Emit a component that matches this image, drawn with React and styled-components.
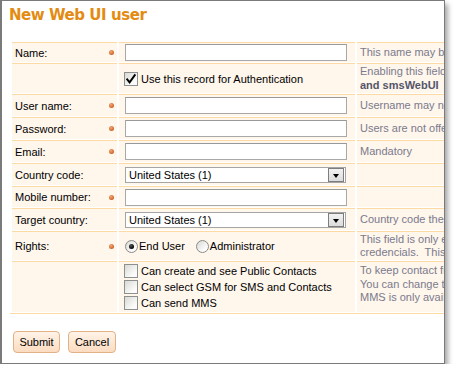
import React from 'react';
import styled, { createGlobalStyle } from 'styled-components';

const Global = createGlobalStyle`
  html, body { margin: 0; padding: 0; background: #fff; }
  body { font-family: "Liberation Sans", Arial, sans-serif; font-size: 11px; color: #000; }
`;

const Window = styled.div`
  width: 445px;
  height: 364px;
  box-sizing: border-box;
  border: 1px solid #7a7a7a;
  border-left: 2px solid #7a7a7a;
  background: #fff;
  box-shadow: 3px 4px 5px rgba(0, 0, 0, 0.35);
  overflow: hidden;
  padding: 5px 0 0 7px;
`;

const Title = styled.h1`
  margin: 0 0 18px 0;
  font-family: "DejaVu Sans", Verdana, sans-serif;
  font-weight: bold;
  font-size: 15px;
  letter-spacing: -0.45px;
  line-height: 18px;
  color: #e48b12;
  white-space: nowrap;
`;

const Form = styled.div`
  display: grid;
  grid-template-columns: 105px 236px 260px;
  grid-template-rows: 20px 30px 22px 22px 22px 22px 21px 22px 29px 51px;
  column-gap: 2px;
  row-gap: 1px;
  margin-left: 3px;
`;

const Cell = styled.div`
  box-sizing: border-box;
  border-top: 1px solid #fdd9a3;
  background: #fff6ec;
  display: flex;
  align-items: center;
  min-width: 0;
`;

const LabelCell = styled(Cell)`
  justify-content: space-between;
  padding: 0 3px 0 3px;
  white-space: nowrap;
`;

const FieldCell = styled(Cell)`
  padding-left: 6px;
`;

const HelpCell = styled(Cell)`
  padding: 0 3px;
  color: #7a7a8c;
  line-height: 13.5px;
  white-space: nowrap;
  overflow: hidden;
  align-items: ${(p) => (p.$top ? 'flex-start' : 'center')};
  padding-top: ${(p) => (p.$top ? '2px' : '0')};
`;

const HelpText = styled.div``;

const Strong = styled.b`
  color: #55556a;
`;

const Dot = styled.span`
  width: 5px;
  height: 5px;
  border-radius: 50%;
  background: radial-gradient(circle at 40% 35%, #f4a878, #cc6428 70%);
  flex: none;
`;

const TextInput = styled.input`
  box-sizing: border-box;
  width: 222px;
  height: 17px;
  margin: 0;
  padding: 0 3px;
  border: 1px solid #a8a8a8;
  border-top-color: #999;
  background: #fff;
  font: inherit;
  outline: none;
`;

const Select = styled.div`
  box-sizing: border-box;
  width: 221px;
  height: 16px;
  border: 1px solid #a5a5a5;
  background: #fff;
  display: flex;
  align-items: center;
  justify-content: space-between;
  padding-left: 3px;
  padding-right: 1px;
`;

const SelectText = styled.span`
  white-space: nowrap;
`;

const DropButton = styled.span`
  box-sizing: border-box;
  width: 16px;
  height: 14px;
  border: 1px solid #7d7d7d;
  background: linear-gradient(#f2f2f2, #dcdcdc);
  display: flex;
  align-items: center;
  justify-content: center;
  padding-top: 2px;
`;

const Triangle = styled.span`
  width: 0;
  height: 0;
  border-left: 3.5px solid transparent;
  border-right: 3.5px solid transparent;
  border-top: 4px solid #000;
`;

const CheckLabel = styled.label`
  display: flex;
  align-items: center;
  gap: 3px;
  white-space: nowrap;
  height: 16px;
`;

const Box = styled.span`
  box-sizing: border-box;
  width: 14px;
  height: 14px;
  margin-left: -1px;
  border: 1px solid #8e8f8f;
  background: linear-gradient(135deg, #d9d9d4, #fbfbfb 75%);
  display: flex;
  align-items: center;
  justify-content: center;
  flex: none;
`;

const CheckList = styled.div`
  display: flex;
  flex-direction: column;
`;

const RadioGroup = styled.div`
  display: flex;
  align-items: center;
  gap: 11px;
`;

const RadioLabel = styled.label`
  display: flex;
  align-items: center;
  gap: 1px;
  white-space: nowrap;
`;

const Radio = styled.span`
  box-sizing: border-box;
  width: 13px;
  height: 13px;
  border-radius: 50%;
  border: 1px solid #8a8a8a;
  background: linear-gradient(135deg, #d8d8d3, #fdfdfd 75%);
  display: flex;
  align-items: center;
  justify-content: center;
  flex: none;
`;

const RadioDot = styled.span`
  width: 5px;
  height: 5px;
  border-radius: 50%;
  background: radial-gradient(circle at 40% 35%, #555, #000 70%);
`;

const BottomLine = styled.div`
  height: 1px;
  background: #fdd9a3;
  margin: 1px 0 0 1px;
  width: 460px;
`;

const Buttons = styled.div`
  display: flex;
  gap: 8px;
  margin: 17px 0 0 4px;
`;

const Button = styled.button`
  box-sizing: border-box;
  height: 22px;
  width: ${(p) => p.$w}px;
  padding: 0;
  border: 1px solid #e2b185;
  border-radius: 4px;
  background: linear-gradient(#fff3e7, #fbdcc1);
  font-family: "Liberation Sans", Arial, sans-serif;
  font-size: 11px;
  color: #000;
`;

function CheckBox({ checked }) {
  return (
    <Box>
      {checked && (
        <svg width="12" height="12" viewBox="0 0 12 12">
          <path d="M2.2 6.4 L4.6 9.4 L9.8 2.2" fill="none" stroke="#000" strokeWidth="1.9" strokeLinecap="square" />
        </svg>
      )}
    </Box>
  );
}

function Label({ text, required }) {
  return (
    <LabelCell>
      <span>{text}</span>
      {required && <Dot />}
    </LabelCell>
  );
}

function SelectBox({ value }) {
  return (
    <Select>
      <SelectText>{value}</SelectText>
      <DropButton>
        <Triangle />
      </DropButton>
    </Select>
  );
}

export default function App() {
  return (
    <>
      <Global />
      <Window>
        <Title>New Web UI user</Title>
        <Form>
          <Label text="Name:" required />
          <FieldCell><TextInput /></FieldCell>
          <HelpCell>This name may be displayed to other users</HelpCell>

          <Label text="" />
          <FieldCell>
            <CheckLabel><CheckBox checked />Use this record for Authentication</CheckLabel>
          </FieldCell>
          <HelpCell>
            <HelpText>
              Enabling this field allows the user to log in to smsAdmin<br />
              <Strong>and smsWebUI</Strong>
            </HelpText>
          </HelpCell>

          <Label text="User name:" required />
          <FieldCell><TextInput /></FieldCell>
          <HelpCell>Username may not be changed later</HelpCell>

          <Label text="Password:" required />
          <FieldCell><TextInput type="password" /></FieldCell>
          <HelpCell>Users are not offered to change it</HelpCell>

          <Label text="Email:" required />
          <FieldCell><TextInput /></FieldCell>
          <HelpCell>Mandatory</HelpCell>

          <Label text="Country code:" />
          <FieldCell><SelectBox value="United States (1)" /></FieldCell>
          <HelpCell />

          <Label text="Mobile number:" required />
          <FieldCell><TextInput /></FieldCell>
          <HelpCell />

          <Label text="Target country:" />
          <FieldCell><SelectBox value="United States (1)" /></FieldCell>
          <HelpCell>Country code the messages are sent to</HelpCell>

          <Label text="Rights:" required />
          <FieldCell>
            <RadioGroup>
              <RadioLabel><Radio><RadioDot /></Radio>End User</RadioLabel>
              <RadioLabel><Radio />Administrator</RadioLabel>
            </RadioGroup>
          </FieldCell>
          <HelpCell>
            <HelpText>
              This field is only editable with administrator<br />
              credencials.&nbsp; This user may not change it
            </HelpText>
          </HelpCell>

          <Label text="" />
          <FieldCell>
            <CheckList>
              <CheckLabel><CheckBox />Can create and see Public Contacts</CheckLabel>
              <CheckLabel><CheckBox />Can select GSM for SMS and Contacts</CheckLabel>
              <CheckLabel><CheckBox />Can send MMS</CheckLabel>
            </CheckList>
          </FieldCell>
          <HelpCell $top>
            <HelpText>
              To keep contact from other users private<br />
              You can change this setting at any time<br />
              MMS is only available on some gateways
            </HelpText>
          </HelpCell>
        </Form>
        <BottomLine />
        <Buttons>
          <Button $w={47}>Submit</Button>
          <Button $w={48}>Cancel</Button>
        </Buttons>
      </Window>
    </>
  );
}
